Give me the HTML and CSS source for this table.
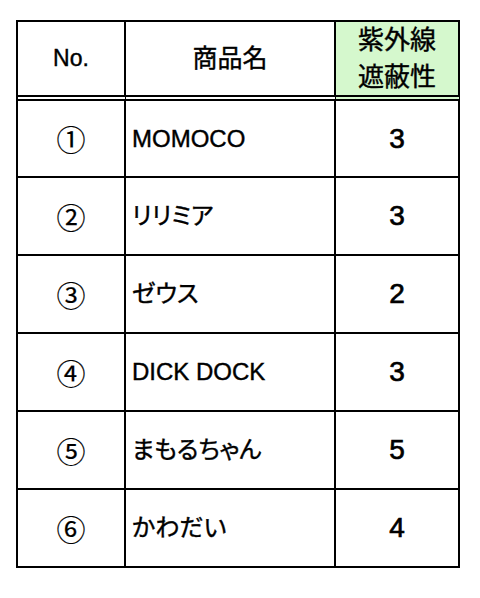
FILE: index.html
```html
<!DOCTYPE html>
<html lang="ja">
<head>
<meta charset="utf-8">
<title>紫外線遮蔽性</title>
<link rel="stylesheet" href="styles.css">
</head>
<body>
<div class="sheet">
  <div class="cell head c1">No.</div>
  <div class="cell head c2">商品名</div>
  <div class="cell head c3 green">紫外線<br>遮蔽性</div>

  <div class="cell c1 circ">①</div>
  <div class="cell c2 name">MOMOCO</div>
  <div class="cell c3 num">3</div>

  <div class="cell c1 circ">②</div>
  <div class="cell c2 name">リリミア</div>
  <div class="cell c3 num">3</div>

  <div class="cell c1 circ">③</div>
  <div class="cell c2 name">ゼウス</div>
  <div class="cell c3 num">2</div>

  <div class="cell c1 circ">④</div>
  <div class="cell c2 name">DICK DOCK</div>
  <div class="cell c3 num">3</div>

  <div class="cell c1 circ">⑤</div>
  <div class="cell c2 name">まもるちゃん</div>
  <div class="cell c3 num">5</div>

  <div class="cell c1 circ">⑥</div>
  <div class="cell c2 name">かわだい</div>
  <div class="cell c3 num">4</div>
</div>
</body>
</html>
```
FILE: styles.css
```css
html, body {
  margin: 0;
  padding: 0;
  background: #ffffff;
}

body {
  font-family: "Liberation Sans", "Noto Sans CJK JP", sans-serif;
  color: #000000;
  font-feature-settings: "palt";
}

.sheet {
  display: grid;
  grid-template-columns: 108px 210px 124px;
  grid-template-rows: 79px 77px 78px 78px 78px 78px 78px;
  width: fit-content;
  margin: 20px 0 0 16px;
  border-top: 2px solid #000;
  border-left: 2px solid #000;
}

.cell {
  box-sizing: border-box;
  border-right: 2px solid #000;
  border-bottom: 2px solid #000;
  display: flex;
  align-items: center;
  justify-content: center;
  line-height: 1;
  -webkit-text-stroke: 0.4px #000;
}

.head {
  border-bottom: 6px double #000;
  font-size: 25px;
}

.head.c1 {
  font-size: 23px;
}

.green {
  background: #d5f8cd;
  font-size: 26px;
  line-height: 37px;
  text-align: center;
}

.name {
  justify-content: flex-start;
  padding-left: 6px;
  font-size: 24px;
}

.circ {
  font-family: "Noto Sans CJK JP", sans-serif;
  font-size: 29px;
  -webkit-text-stroke: 0.2px #000;
}

.num {
  font-size: 28px;
  -webkit-text-stroke: 0.7px #000;
}
```
